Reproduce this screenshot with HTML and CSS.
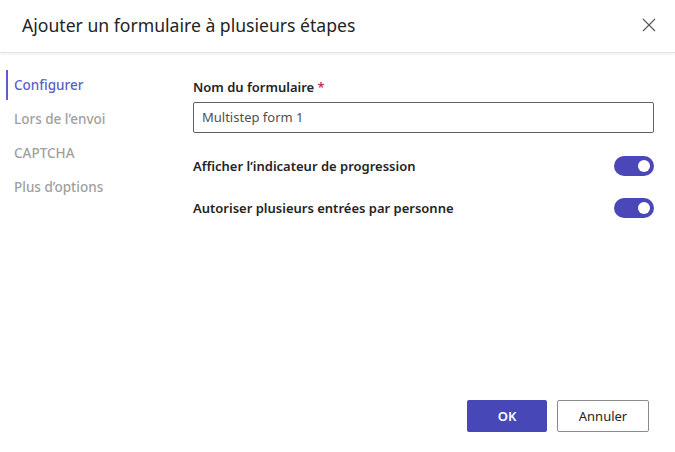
FILE: index.html
```html
<!DOCTYPE html>
<html lang="fr">
<head>
<meta charset="utf-8">
<link rel="stylesheet" href="styles.css">
</head>
<body>
<div class="dialog">
  <header class="header">
    <h1 class="title">Ajouter un formulaire à plusieurs étapes</h1>
    <button class="close" aria-label="Fermer">
      <svg width="14" height="14" viewBox="0 0 14 14"><path d="M1 1 L13 13 M13 1 L1 13" stroke="#555" stroke-width="1.1" fill="none"/></svg>
    </button>
  </header>
  <div class="main">
    <nav class="nav">
      <div class="nav-item active">Configurer</div>
      <div class="nav-item">Lors de l’envoi</div>
      <div class="nav-item">CAPTCHA</div>
      <div class="nav-item">Plus d’options</div>
    </nav>
    <section class="content">
      <label class="label">Nom du formulaire <span class="req">*</span></label>
      <div class="input">Multistep form 1</div>
      <div class="row">
        <span class="row-label">Afficher l’indicateur de progression</span>
        <span class="toggle"><span class="knob"></span></span>
      </div>
      <div class="row">
        <span class="row-label">Autoriser plusieurs entrées par personne</span>
        <span class="toggle"><span class="knob"></span></span>
      </div>
    </section>
  </div>
  <footer class="footer">
    <button class="btn primary">OK</button>
    <button class="btn secondary">Annuler</button>
  </footer>
</div>
</body>
</html>
```
FILE: styles.css
```css
* { box-sizing: border-box; }
html, body { margin: 0; padding: 0; background: #fff; }
body {
  font-family: "Noto Sans", "Open Sans", sans-serif;
  color: #242424;
  width: 675px;
  height: 452px;
  overflow: hidden;
}
.dialog {
  display: flex;
  flex-direction: column;
  height: 452px;
}
.header {
  height: 53px;
  display: flex;
  align-items: center;
  justify-content: space-between;
  padding: 0 19px 0 22px;
  border-bottom: 1px solid #e3e3e3;
  box-shadow: 0 1px 3px rgba(0,0,0,0.08);
}
.title {
  margin: 0;
  font-size: 17.6px;
  font-weight: 400;
  color: #242424;
  position: relative;
  top: -1px;
}
.close {
  border: 0;
  background: none;
  padding: 0;
  width: 14px;
  height: 14px;
  display: flex;
  position: relative;
  top: -1px;
}
.main {
  flex: 1;
  display: flex;
  padding-top: 17px;
}
.nav {
  width: 193px;
  padding-left: 6px;
  display: flex;
  flex-direction: column;
}
.nav-item {
  height: 30px;
  margin-bottom: 4px;
  line-height: 30px;
  padding-left: 8px;
  font-size: 13.5px;
  font-weight: 500;
  color: #a19f9d;
  border-left: 2px solid transparent;
  margin-left: -2px;
}
.nav-item.active {
  color: #5b5fc7;
  border-left-color: #5b5fc7;
  margin-left: 0;
  padding-left: 6px;
}
.content {
  flex: 1;
  padding-right: 21px;
  padding-top: 7px;
  display: flex;
  flex-direction: column;
}
.label {
  font-size: 13px;
  font-weight: 600;
  line-height: 18px;
  margin-top: 1px;
  color: #242424;
}
.req { color: #c4314b; }
.input {
  margin-top: 6px;
  height: 31px;
  border: 1px solid #616161;
  border-radius: 2px;
  padding: 0 8px;
  line-height: 29px;
  font-size: 13px;
  color: #505050;
}
.row {
  display: flex;
  align-items: center;
  justify-content: space-between;
  height: 20px;
  margin-top: 23px;
}
.row + .row { margin-top: 22px; }
.row-label {
  font-size: 13px;
  font-weight: 600;
  color: #242424;
}
.toggle {
  width: 40px;
  height: 20px;
  border-radius: 10px;
  background: #4b47b9;
  display: flex;
  align-items: center;
  justify-content: flex-end;
  padding-right: 4px;
}
.knob {
  width: 12px;
  height: 12px;
  border-radius: 50%;
  background: #fff;
}
.footer {
  display: flex;
  justify-content: flex-end;
  gap: 10px;
  padding: 0 26px 20px 0;
}
.btn {
  height: 32px;
  border-radius: 2px;
  font-family: inherit;
  font-size: 13px;
  font-weight: 600;
}
.primary {
  width: 80px;
  background: #4747b8;
  color: #fff;
  border: 0;
}
.secondary {
  width: 92px;
  background: #fff;
  color: #242424;
  border: 1px solid #8a8a8a;
  font-weight: 400;
}
```
